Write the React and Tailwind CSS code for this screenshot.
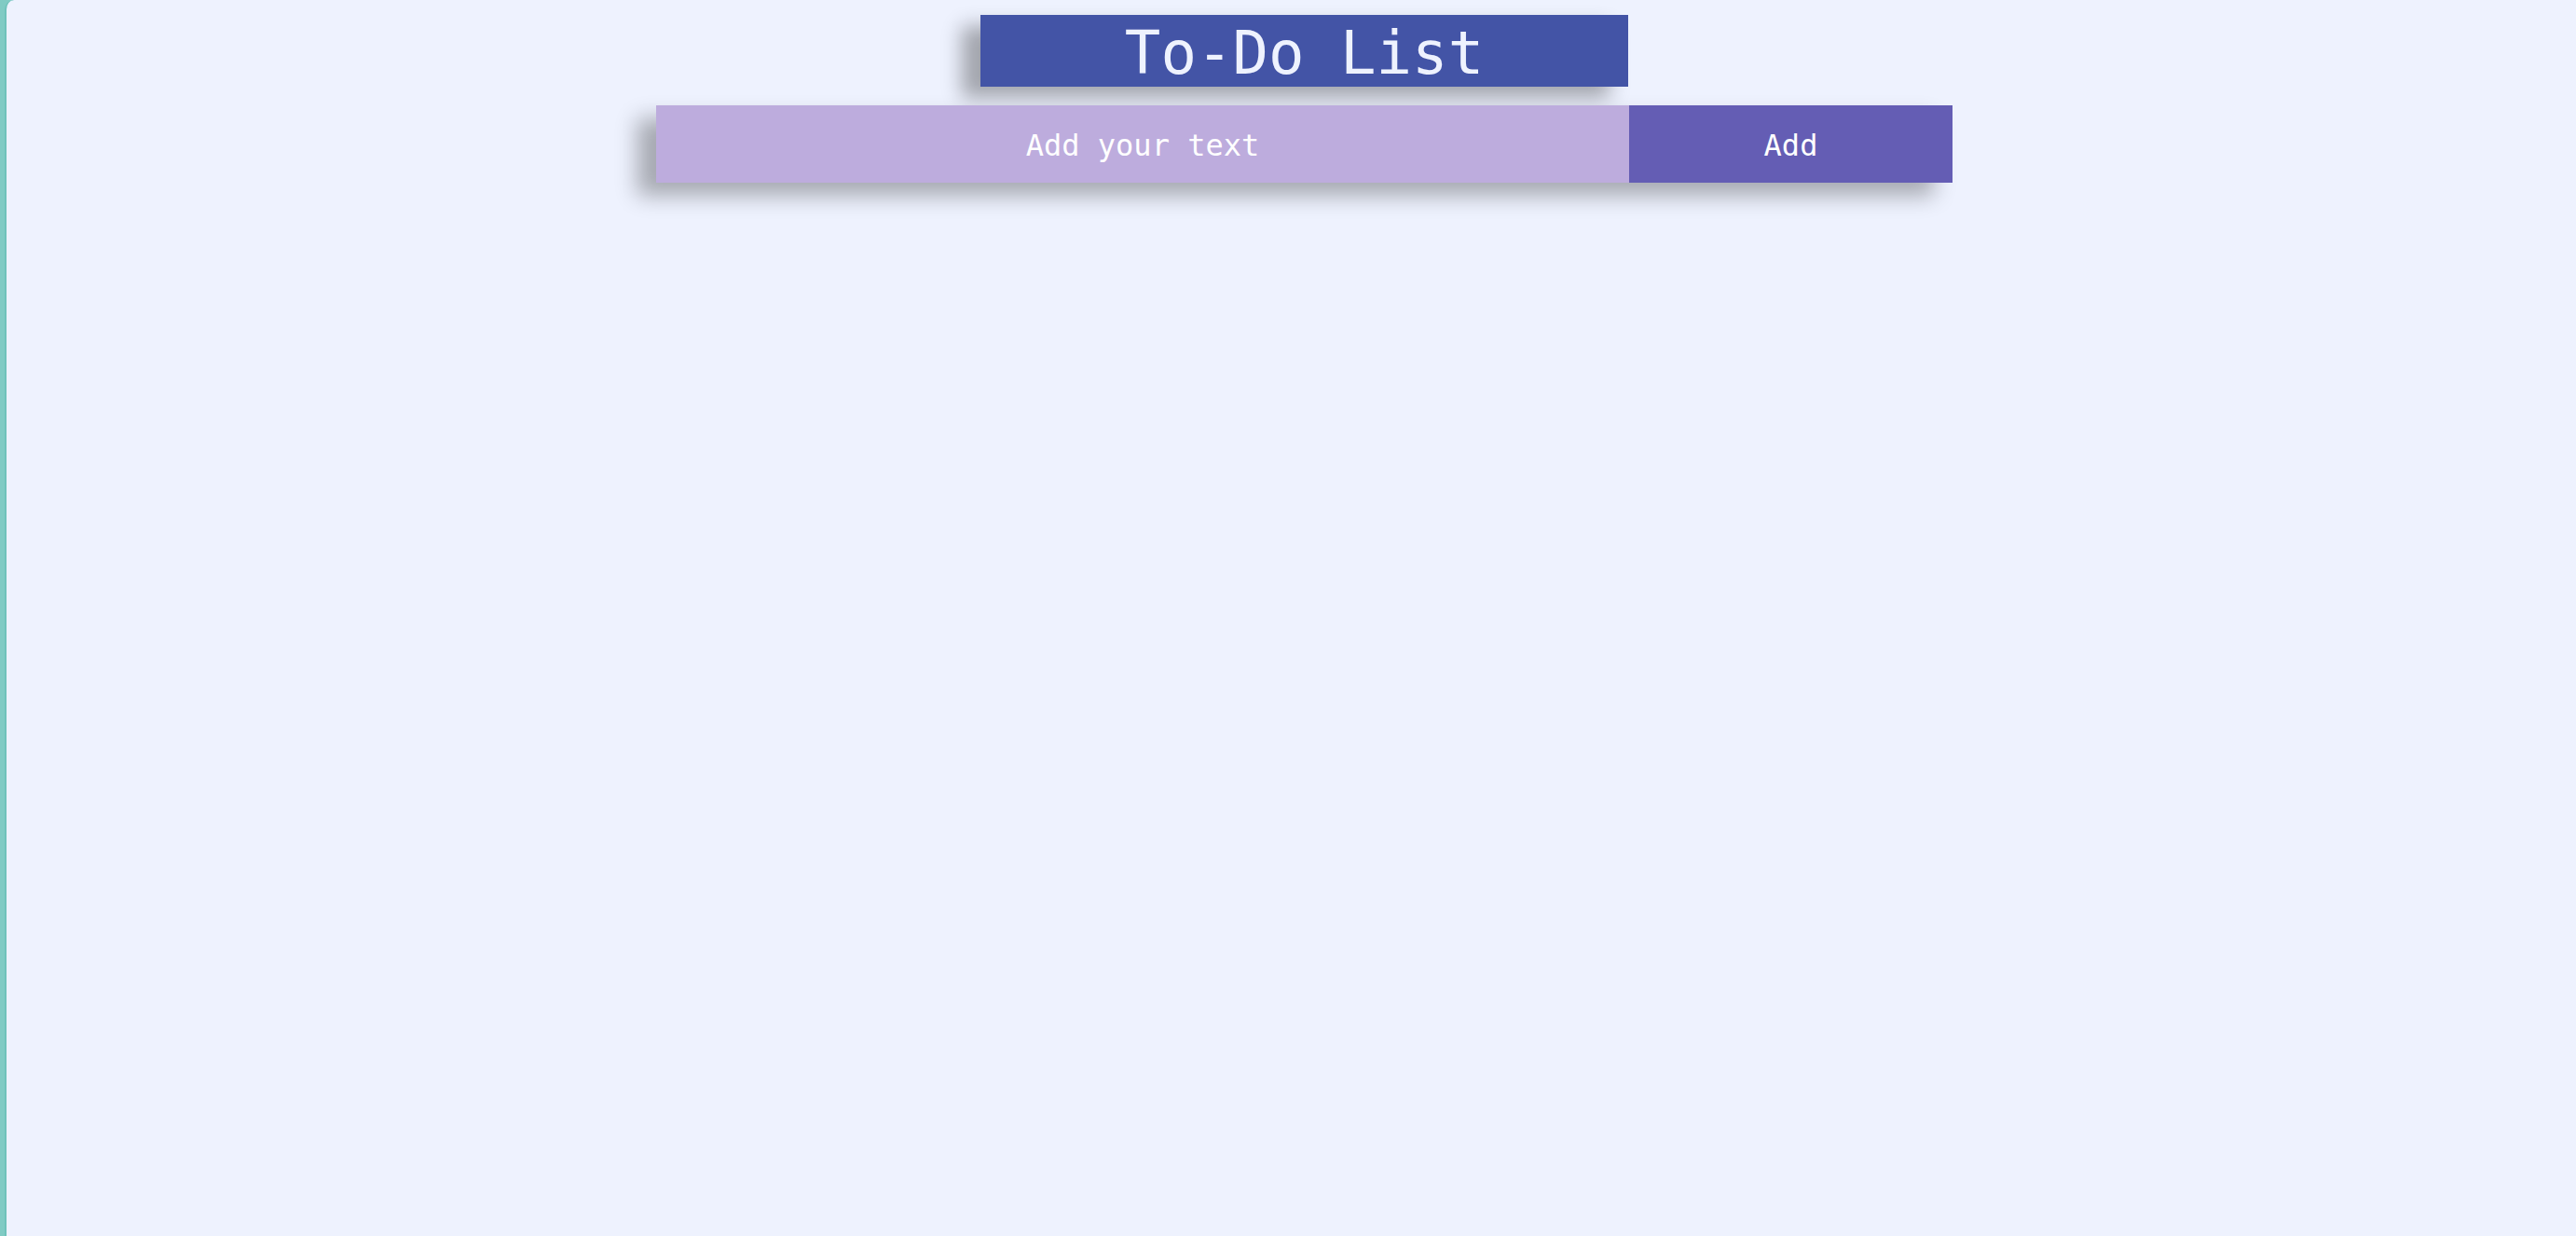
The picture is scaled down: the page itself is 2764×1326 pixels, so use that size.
export default function App() {
  return (
    <div className="h-screen w-full bg-[#80cbc4] pl-[5px] overflow-hidden">
      <div className="h-full w-full border-l-2 border-[#6fc2bb] rounded-tl-[10px] bg-[#eef2fe] pl-[28px] flex flex-col items-center font-['DejaVu_Sans_Mono',monospace]">
        <h1 className="mt-[16px] w-[695px] h-[77px] bg-[#4354a6] text-[#eef2fe] text-[64px] leading-[77px] pt-[3px] text-center font-normal shadow-[-20px_12px_20px_rgba(0,0,0,0.32)]">
          To-Do List
        </h1>
        <div className="mt-[20px] flex h-[83px] shadow-[-20px_14px_22px_rgba(0,0,0,0.3)]">
          <input
            type="text"
            placeholder="Add your text"
            className="w-[1044px] h-full pt-[3px] bg-[#bdacdd] text-white placeholder:text-white text-[32px] text-center outline-none border-0 font-['DejaVu_Sans_Mono',monospace]"
          />
          <button className="w-[347px] h-full pt-[2px] bg-[#645db4] text-white text-[32px] font-['DejaVu_Sans_Mono',monospace]">
            Add
          </button>
        </div>
      </div>
    </div>
  );
}
